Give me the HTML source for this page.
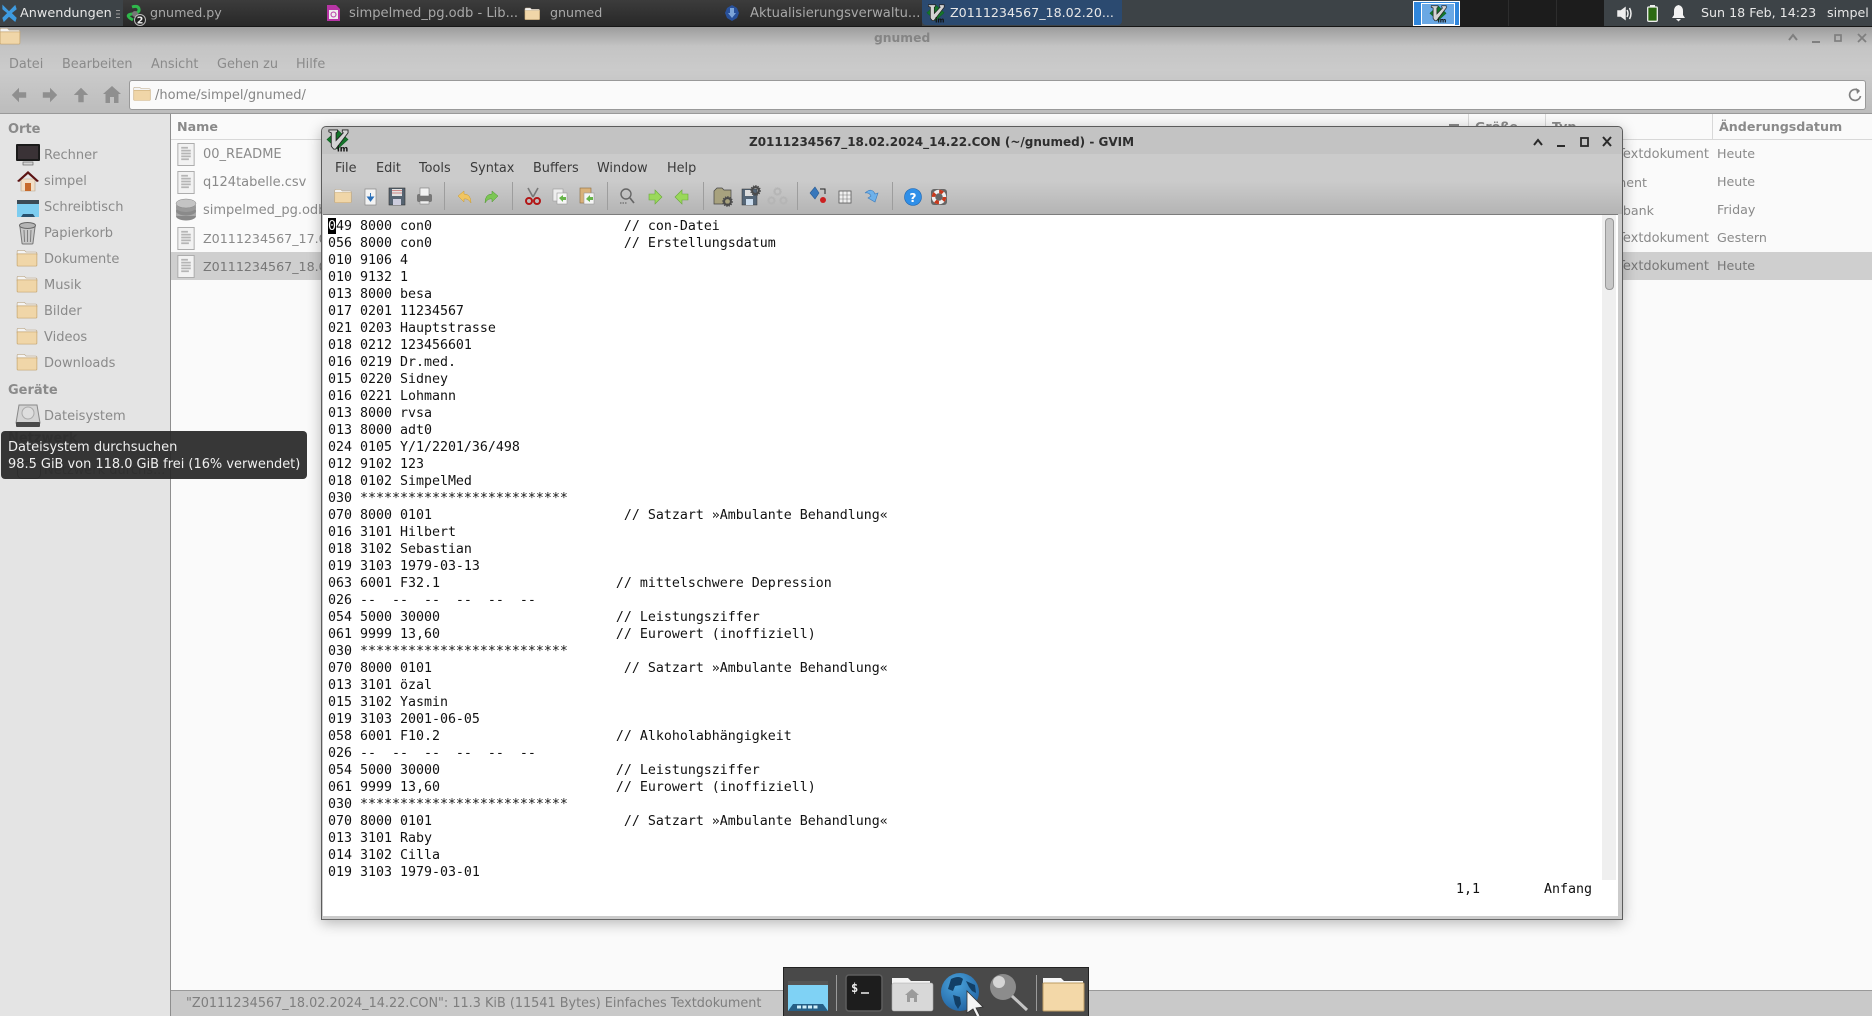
<!DOCTYPE html>
<html lang="de"><head><meta charset="utf-8"><title>GVIM</title>
<style>
html,body{margin:0;padding:0;width:1872px;height:1016px;overflow:hidden;background:#fafafa}
body{position:relative;font:13px "DejaVu Sans","Liberation Sans",sans-serif;color:#8a8a8a}
.a{position:absolute;white-space:nowrap}
.t{position:absolute;white-space:nowrap;line-height:16px;transform:translateY(-6px)}
svg.i{position:absolute;overflow:visible}
#code{position:absolute;left:328px;top:218px;margin:0;font:13.29px/17px "DejaVu Sans Mono","Liberation Mono",monospace;color:#111;white-space:pre}
.m{color:#3a3a3a;font-size:12.85px}
.n{font-size:12.85px}
.t.d{font-size:12.67px;transform:translateY(-7px)}
.t.w{color:#e8e8e8;font-size:12.67px;transform:translateY(-7px)}
.t.g{color:#a8a8a8;font-size:12.67px;transform:translateY(-7px)}
</style></head><body>
<svg width="0" height="0" style="position:absolute"><defs>
<symbol id="folder" viewBox="0 0 24 20"><path d="M1 3.5Q1 2 2.5 2H9l2 2h10.5Q23 4 23 5.500V7H1z" fill="#f4f4f4" stroke="#b9a585" stroke-width=".7"/><path d="M1 6h22v12.500q0 1-1 1H2q-1 0-1-1z" fill="#f0d6a8" stroke="#c5a56f" stroke-width=".8"/></symbol>
<symbol id="doc" viewBox="0 0 18 24"><rect x=".5" y=".5" width="17" height="23" fill="#f2f2f2" stroke="#aaa"/><path d="M4 5h7M4 8h10M4 11h10M4 14h10M4 17h8" stroke="#b5b5b5" stroke-width="1.800"/></symbol>
<symbol id="vim" viewBox="0 0 24 24"><path d="M12 1L23 11 12 21 1 11z" fill="#14752a" stroke="#0a5a1c" stroke-width=".6"/><path d="M3 1h9v2l-1.500 1v8L18 4l-1-1V1h6v3L10 21H8L5.500 18V4L3 3z" fill="#d4d4d4" stroke="#222" stroke-width=".9"/><text x="11.500" y="23.500" font-family="DejaVu Sans" font-size="8.500" font-weight="bold" fill="#111">im</text></symbol>
<symbol id="ar" viewBox="0 0 20 20"><path d="M10 2l8 8-8 8v-5H2V7h8z" fill="currentColor"/></symbol>
<symbol id="gear" viewBox="0 0 16 16"><circle cx="8" cy="8" r="5" fill="none" stroke="currentColor" stroke-width="3"/><circle cx="8" cy="8" r="7" fill="none" stroke="currentColor" stroke-width="1.500" stroke-dasharray="2 1.600"/></symbol>
</defs></svg>

<!-- file manager chrome -->
<div class="a" style="left:0;top:27px;width:1872px;height:87px;background:linear-gradient(#9c9c9c,#c4c4c4 22%,#cbcbcb 50%,#bcbcbc)"></div>
<svg class="i" style="left:0;top:28px" width="22" height="19" viewBox="1 2 22 18"><use href="#folder"/></svg>
<div class="t" style="left:874px;top:36px;font-weight:bold;color:#858585;font-size:12.3px">gnumed</div>
<svg class="i" style="left:1785px;top:30px" width="85" height="16" fill="none" stroke="#7f7f7f" stroke-width="2"><path d="M4 10l4-5 4 5M27 12h8"/><rect x="50" y="5" width="6" height="6" stroke-width="1.700"/><path d="M73 4l8 8M81 4l-8 8" stroke-width="1.800"/></svg>
<div class="t n" style="left:9px;top:63px">Datei</div>
<div class="t n" style="left:62px;top:63px">Bearbeiten</div>
<div class="t n" style="left:151px;top:63px">Ansicht</div>
<div class="t n" style="left:217px;top:63px">Gehen zu</div>
<div class="t n" style="left:296px;top:63px">Hilfe</div>
<svg class="i" style="left:10px;top:86px;color:#8f8f8f;transform:scaleX(-1)" width="18" height="18"><use href="#ar"/></svg>
<svg class="i" style="left:41px;top:86px;color:#8f8f8f" width="18" height="18"><use href="#ar"/></svg>
<svg class="i" style="left:72px;top:86px;color:#8f8f8f;transform:rotate(-90deg)" width="18" height="18"><use href="#ar"/></svg>
<svg class="i" style="left:103px;top:86px" width="18" height="17" viewBox="0 0 18 17"><path d="M9 0l9 8h-2.500v9H11v-6H7v6H2.500V8H0z" fill="#8f8f8f"/></svg>
<div class="a" style="left:129px;top:80px;width:1735px;height:28px;background:#fafafa;border:1px solid #999;border-radius:3px"></div>
<svg class="i" style="left:133px;top:86px" width="18" height="16" viewBox="0 1 24 20"><use href="#folder"/></svg>
<div class="t" style="left:155px;top:94px;color:#858585">/home/simpel/gnumed/</div>
<svg class="i" style="left:1848px;top:87px" width="14" height="15" fill="none" stroke="#808080" stroke-width="1.700"><path d="M11 4A5.500 5.500 0 1 0 12.500 9"/><path d="M8 1l4 3-3 3z" fill="#808080" stroke="none"/></svg>

<!-- sidebar -->
<div class="a" style="left:0;top:114px;width:170px;height:902px;background:#e4e4e4;border-right:1px solid #8e8e8e"></div>
<div class="a" style="left:0;top:113px;width:1872px;height:1px;background:#999"></div>
<div class="t" style="left:8px;top:128px;font-weight:bold">Orte</div>
<svg class="i" style="left:16px;top:144px" width="24" height="22"><rect width="24" height="17" rx="1" fill="#1a1a1a"/><rect x="2" y="2" width="20" height="13" fill="#3a3236"/><rect x="7" y="18" width="10" height="3" fill="#d5d5d5" stroke="#555" stroke-width=".6"/></svg>
<div class="t" style="left:44px;top:154px">Rechner</div>
<svg class="i" style="left:17px;top:170px" width="22" height="22"><path d="M4 9h14v12H4z" fill="#f2dfc8" stroke="#b7a188" stroke-width=".6"/><rect x="8" y="13" width="6" height="8" fill="#c76a2c"/><path d="M0 11L11 1l11 10-2 1-9-8-9 8z" fill="#5c1313"/></svg>
<div class="t" style="left:44px;top:180px">simpel</div>
<svg class="i" style="left:17px;top:200px" width="22" height="17"><rect width="22" height="17" fill="#7dcdf0"/><rect width="22" height="4" fill="#3b4a55"/><path d="M4 17l2-3h10l2 3z" fill="#29516e"/></svg>
<div class="t" style="left:44px;top:206px">Schreibtisch</div>
<svg class="i" style="left:19px;top:222px" width="17" height="22"><path d="M1 5h15l-2 16q0 1-1 1H4q-1 0-1-1z" fill="#c8c8c8" stroke="#777"/><path d="M5 8l.6 12M8.500 8v12M12 8l-.6 12" stroke="#7f7f7f"/><ellipse cx="8.500" cy="3.500" rx="8" ry="3" fill="#b5b5b5" stroke="#666"/></svg>
<div class="t" style="left:44px;top:232px">Papierkorb</div>
<svg class="i" style="left:17px;top:250px" width="22" height="19" viewBox="1 2 22 18"><use href="#folder"/></svg>
<div class="t" style="left:44px;top:258px">Dokumente</div>
<svg class="i" style="left:17px;top:276px" width="22" height="19" viewBox="1 2 22 18"><use href="#folder"/></svg>
<div class="t" style="left:44px;top:284px">Musik</div>
<svg class="i" style="left:17px;top:302px" width="22" height="19" viewBox="1 2 22 18"><use href="#folder"/></svg>
<div class="t" style="left:44px;top:310px">Bilder</div>
<svg class="i" style="left:17px;top:328px" width="22" height="19" viewBox="1 2 22 18"><use href="#folder"/></svg>
<div class="t" style="left:44px;top:336px">Videos</div>
<svg class="i" style="left:17px;top:354px" width="22" height="19" viewBox="1 2 22 18"><use href="#folder"/></svg>
<div class="t" style="left:44px;top:362px">Downloads</div>
<div class="t" style="left:8px;top:389px;font-weight:bold">Geräte</div>
<svg class="i" style="left:16px;top:404px" width="24" height="23"><path d="M3 1h18l3 18H0z" fill="#d4d4d4" stroke="#888"/><circle cx="12" cy="9" r="6" fill="#dedede" stroke="#aaa"/><rect y="18" width="24" height="5" rx="1" fill="#4a4a4a"/></svg>
<div class="t" style="left:44px;top:415px">Dateisystem</div>
<div class="t" style="left:8px;top:437px;font-weight:bold">Netzwerk</div>
<div class="t" style="left:44px;top:469px">Netzwerk durchs...</div>
<div class="a" style="left:17px;top:461px;width:22px;height:16px;border:1px solid #777;border-radius:5px"></div>

<!-- list -->
<div class="t d" style="left:177px;top:126px;font-weight:bold">Name</div>
<div class="a" style="left:171px;top:139px;width:1701px;height:1px;background:#d8d8d8"></div>
<div class="a" style="left:171px;top:252px;width:1701px;height:28px;background:#cfcfcf"></div>
<div class="a" style="left:1468px;top:114px;width:1px;height:25px;background:#d8d8d8"></div>
<div class="a" style="left:1545px;top:114px;width:1px;height:25px;background:#d8d8d8"></div>
<div class="a" style="left:1712px;top:114px;width:1px;height:25px;background:#d8d8d8"></div>
<div class="a" style="left:1449px;top:124px;width:10px;height:2px;background:#8a8a8a"></div>
<div class="t d" style="left:1475px;top:126px;font-weight:bold">Größe</div>
<div class="t d" style="left:1552px;top:126px;font-weight:bold">Typ</div>
<div class="t d" style="left:1719px;top:126px;font-weight:bold">Änderungsdatum</div>
<svg class="i" style="left:177px;top:143px" width="18" height="23"><use href="#doc"/></svg>
<div class="t" style="left:203px;top:153px">00_README</div>
<svg class="i" style="left:177px;top:171px" width="18" height="23"><use href="#doc"/></svg>
<div class="t" style="left:203px;top:181px">q124tabelle.csv</div>
<svg class="i" style="left:176px;top:199px" width="20" height="22"><ellipse cx="10" cy="17" rx="10" ry="4.500" fill="#888"/><rect y="6" width="20" height="11" fill="#aaa"/><ellipse cx="10" cy="12" rx="10" ry="4.500" fill="#8a8a8a"/><ellipse cx="10" cy="8.500" rx="10" ry="4.500" fill="#9a9a9a"/><ellipse cx="10" cy="4.500" rx="10" ry="4.500" fill="#c4c4c4" stroke="#888" stroke-width=".5"/></svg>
<div class="t" style="left:203px;top:209px">simpelmed_pg.odb</div>
<svg class="i" style="left:177px;top:227px" width="18" height="23"><use href="#doc"/></svg>
<div class="t d" style="left:203px;top:238px">Z0111234567_17.02.2024_14.22.CON</div>
<svg class="i" style="left:177px;top:255px" width="18" height="23"><use href="#doc"/></svg>
<div class="t d" style="left:203px;top:266px;color:#777">Z0111234567_18.02.2024_14.22.CON</div>
<div class="t" style="right:163px;top:153px">Einfaches Textdokument</div>
<div class="t d" style="right:225px;top:182px">CSV-Dokument</div>
<div class="t d" style="right:218px;top:210px">ODB-Datenbank</div>
<div class="t" style="right:163px;top:237px">Einfaches Textdokument</div>
<div class="t" style="right:163px;top:265px;color:#777">Einfaches Textdokument</div>
<div class="t d" style="left:1717px;top:153px">Heute</div>
<div class="t d" style="left:1717px;top:181px">Heute</div>
<div class="t d" style="left:1717px;top:209px">Friday</div>
<div class="t d" style="left:1717px;top:237px">Gestern</div>
<div class="t d" style="left:1717px;top:265px;color:#777">Heute</div>

<!-- status bar -->
<div class="a" style="left:171px;top:990px;width:1701px;height:26px;background:#c9c9c9;border-top:1px solid #999;box-sizing:border-box"></div>
<div class="t" style="left:186px;top:1002px;color:#7e7e7e;font-size:12.83px">"Z0111234567_18.02.2024_14.22.CON": 11.3 KiB (11541 Bytes) Einfaches Textdokument</div>

<!-- gvim window -->
<div class="a" style="left:321px;top:126px;width:1300px;height:792px;background:#cbcbcb;border:1px solid #5c5c5c;border-bottom:1px solid #666;border-radius:5px 5px 0 0;box-shadow:0 3px 14px rgba(0,0,0,.28)"></div>
<div class="a" style="left:322px;top:127px;width:1300px;height:27px;background:#c3c3c3;border-radius:5px 5px 0 0"></div>
<svg class="i" style="left:326px;top:129px" width="23" height="23"><use href="#vim"/></svg>
<div class="t" style="left:749px;top:140px;font-weight:bold;font-size:12px;color:#2e2e2e">Z0111234567_18.02.2024_14.22.CON (~/gnumed) - GVIM</div>
<svg class="i" style="left:1530px;top:134px" width="90" height="16" fill="none" stroke="#2a2a2a" stroke-width="2"><path d="M4 11l4-5 4 5M27 12h8"/><rect x="51" y="4" width="7" height="8" stroke-width="1.800"/><path d="M73 3l8 9M81 3l-8 9" stroke-width="2"/></svg>
<div class="a" style="left:322px;top:154px;width:1300px;height:60px;background:linear-gradient(#cbcbcb,#cbcbcb 45%,#b4b4b4)"></div>
<div class="t m" style="left:335px;top:167px">File</div>
<div class="t m" style="left:376px;top:167px">Edit</div>
<div class="t m" style="left:419px;top:167px">Tools</div>
<div class="t m" style="left:470px;top:167px">Syntax</div>
<div class="t m" style="left:533px;top:167px">Buffers</div>
<div class="t m" style="left:597px;top:167px">Window</div>
<div class="t m" style="left:667px;top:167px">Help</div>

<!-- toolbar -->
<svg class="i" style="left:323px;top:180px" width="640" height="34">
<g stroke="#9d9d9d"><path d="M121.500 2v28M189.500 2v28M284.500 2v28M380.500 2v28M474.500 2v28M569.500 2v28"/></g>
<g transform="translate(11,8) scale(.75)"><use href="#folder" width="24" height="20"/></g>
<rect x="42" y="9" width="11" height="16" fill="#f3f3f3" stroke="#888" stroke-width=".7"/><path d="M47.500 13v5M44.500 17l3 4 3-4z" stroke="#2a6fb8" fill="#2a6fb8"/>
<rect x="66" y="8" width="16" height="17" fill="#566472" stroke="#333" stroke-width=".6"/><rect x="69" y="9" width="10" height="7" fill="#e2e2e2"/><path d="M69 10.500h10M69 13h10" stroke="#c88"/><rect x="70" y="19" width="8" height="6" fill="#ccd"/>
<rect x="94" y="14" width="15" height="8" rx="2" fill="#777"/><rect x="97" y="8" width="9" height="8" fill="#f2f2f2" stroke="#777" stroke-width=".6"/><rect x="97" y="21" width="9" height="3" fill="#eee" stroke="#777" stroke-width=".5"/>
<path d="M135 16l6-5v3q7 0 7 9-3-5-7-4v3z" fill="#f0c562" stroke="#c99a30" stroke-width=".5"/>
<path d="M175 16l-6-5v3q-7 0-7 9 3-5 7-4v3z" fill="#7cc654" stroke="#4f9430" stroke-width=".5"/>
<path d="M205 8l5 9M215 8l-5 9" stroke="#777" stroke-width="1.600"/><circle cx="206" cy="21" r="3" fill="none" stroke="#b31616" stroke-width="2"/><circle cx="214" cy="21" r="3" fill="none" stroke="#b31616" stroke-width="2"/>
<rect x="230" y="9" width="10" height="12" fill="#eee" stroke="#999" stroke-width=".6"/><rect x="234" y="13" width="10" height="11" fill="#f6f6f6" stroke="#999" stroke-width=".6"/><path d="M236 18l4-3v2h3v3h-3v2z" fill="#67b54a"/>
<rect x="257" y="8" width="11" height="15" fill="#d9b27a" stroke="#8a6c3f" stroke-width=".6"/><rect x="261" y="13" width="10" height="11" fill="#f5f5f5" stroke="#999" stroke-width=".6"/><path d="M263 19l4-4v2h3v3h-3v2z" fill="#67b54a"/>
<circle cx="303" cy="14" r="5" fill="none" stroke="#666" stroke-width="1.400"/><path d="M307 18l4 5" stroke="#666" stroke-width="1.700"/><path d="M297 23h7" stroke="#555" stroke-dasharray="1.500 1"/>
<path d="M326 14h6v-4l7 7-7 7v-4h-6z" fill="#9ad85a" stroke="#68a83a" stroke-width=".6"/>
<path d="M365 14h-6v-4l-7 7 7 7v-4h6z" fill="#9ad85a" stroke="#68a83a" stroke-width=".6"/>
<path d="M391 11l3-3h5l2 2h7v14h-17z" fill="#a8a27e" stroke="#444" stroke-width=".7"/><svg x="399" y="16" width="11" height="11" color="#4a4a4a"><use href="#gear" width="11" height="11"/></svg>
<rect x="419" y="9" width="15" height="16" fill="#567" stroke="#333" stroke-width=".5"/><rect x="422" y="10" width="8" height="6" fill="#ddd"/><rect x="423" y="19" width="7" height="6" fill="#cde"/><svg x="427" y="5" width="11" height="11" color="#4a4a4a"><use href="#gear" width="11" height="11"/></svg>
<g color="#b5b5b5" transform="translate(1,0)"><svg x="449" y="7" width="9" height="9"><use href="#gear" width="9" height="9"/></svg><svg x="443" y="16" width="9" height="9"><use href="#gear" width="9" height="9"/></svg><svg x="455" y="16" width="9" height="9"><use href="#gear" width="9" height="9"/></svg></g>
<g transform="translate(-2,0)"><path d="M494 7l-5 6 5 6 4-6z" fill="#3777bb" stroke="#2a5a90" stroke-width=".6"/><circle cx="502" cy="20" r="3" fill="#cc2020"/><path d="M499 9h5v5" fill="none" stroke="#222"/></g>
<rect x="516" y="11" width="12" height="12" fill="#f0f0f0" stroke="#555" stroke-width=".8"/><path d="M516 15h12M516 19h12M520 11v12M524 11v12" stroke="#777" stroke-width=".6"/>
<g transform="translate(4,0)"><path d="M538 13q7-6 10 1l3-1-3 9-7-4 3-2q-2-4-6-3z" fill="#6eb1ea" stroke="#3a7bbd" stroke-width=".6"/></g>
<circle cx="590" cy="17" r="8.500" fill="#2f8fe8" stroke="#1f66b0" stroke-width=".6"/><text x="590" y="22" text-anchor="middle" font-family="DejaVu Sans" font-weight="bold" font-size="12" fill="#fff">?</text>
<rect x="608" y="9" width="16" height="16" rx="3" fill="#666"/><circle cx="616" cy="17" r="5.500" fill="none" stroke="#eee" stroke-width="3.500"/><circle cx="616" cy="17" r="5.500" fill="none" stroke="#c9391c" stroke-width="3.500" stroke-dasharray="4 4.640"/></svg>

<div class="a" style="left:323px;top:214px;width:1295px;height:701px;background:#fff;border-top:1px solid #7c7c7c"></div>
<div class="a" style="left:1602px;top:215px;width:14px;height:665px;background:#efefef"></div>
<div class="a" style="left:1605px;top:218px;width:7px;height:70px;background:#c8c8c8;border:1px solid #999;border-radius:4px"></div>
<div class="a" style="left:328px;top:218px;width:8px;height:16px;background:#000"></div>
<pre id="code"><span style="color:#fff">0</span>49 8000 con0                        // con-Datei
056 8000 con0                        // Erstellungsdatum
010 9106 4
010 9132 1
013 8000 besa
017 0201 11234567
021 0203 Hauptstrasse
018 0212 123456601
016 0219 Dr.med.
015 0220 Sidney
016 0221 Lohmann
013 8000 rvsa
013 8000 adt0
024 0105 Y/1/2201/36/498
012 9102 123
018 0102 SimpelMed
030 **************************
070 8000 0101                        // Satzart »Ambulante Behandlung«
016 3101 Hilbert
018 3102 Sebastian
019 3103 1979-03-13
063 6001 F32.1                      // mittelschwere Depression
026 --  --  --  --  --  --
054 5000 30000                      // Leistungsziffer
061 9999 13,60                      // Eurowert (inoffiziell)
030 **************************
070 8000 0101                        // Satzart »Ambulante Behandlung«
013 3101 özal
015 3102 Yasmin
019 3103 2001-06-05
058 6001 F10.2                      // Alkoholabhängigkeit
026 --  --  --  --  --  --
054 5000 30000                      // Leistungsziffer
061 9999 13,60                      // Eurowert (inoffiziell)
030 **************************
070 8000 0101                        // Satzart »Ambulante Behandlung«
013 3101 Raby
014 3102 Cilla
019 3103 1979-03-01</pre>
<div class="a" style="left:1456px;top:881px;font:13.29px/17px 'DejaVu Sans Mono',monospace;color:#111">1,1</div>
<div class="a" style="left:1544px;top:881px;font:13.29px/17px 'DejaVu Sans Mono',monospace;color:#111">Anfang</div>

<!-- tooltip -->
<div class="a" style="left:1px;top:431px;width:306px;height:48px;background:rgba(40,40,40,.93);border-radius:4px"></div>
<div class="t" style="left:8px;top:446px;color:#f0f0f0">Dateisystem durchsuchen</div>
<div class="t" style="left:8px;top:463px;color:#f0f0f0;font-size:12.95px">98.5 GiB von 118.0 GiB frei (16% verwendet)</div>

<!-- top panel -->
<div class="a" style="left:0;top:0;width:1872px;height:26px;background:#3d4347"></div>
<div class="a" style="left:0;top:26px;width:1872px;height:1px;background:#161616"></div>
<div class="a" style="left:123px;top:0;width:799px;height:26px;background:linear-gradient(#3c3c3c,#282828)"></div>
<svg class="i" style="left:2px;top:5px" width="15" height="17"><path d="M1 1l6 6 6-6 1 3-5 4 5 5-1 3-6-5-5 5-1-3 5-5-5-4z" fill="#3e9be0" stroke="#3e9be0" stroke-width="1.200"/></svg>
<div class="t w" style="left:20px;top:13px;font-size:12.8px">Anwendungen</div>
<svg class="i" style="left:116px;top:9px" width="5" height="10" stroke="#9a9a9a"><path d="M0 1.500h4M0 5h4M0 8.500h4"/></svg>
<svg class="i" style="left:126px;top:5px" width="22" height="21"><path d="M6 2q6-2 7 2T6 9t1 6" fill="none" stroke="#2fb84b" stroke-width="3"/><circle cx="9" cy="9" r="3" fill="#777"/><circle cx="14" cy="15" r="5.500" fill="#222" stroke="#bbb" stroke-width="1"/><text x="14" y="18.500" text-anchor="middle" font-size="9.500" font-weight="bold" font-family="DejaVu Sans" fill="#eee">2</text></svg>
<div class="t g" style="left:150px;top:12px">gnumed.py</div>
<svg class="i" style="left:327px;top:5px" width="13" height="16"><path d="M0 0h9l4 4v12H0z" fill="#b735a5"/><rect x="2" y="5" width="9" height="9" fill="#eee"/><circle cx="6.500" cy="9.500" r="2.500" fill="none" stroke="#b735a5"/></svg>
<div class="t g" style="left:349px;top:13px;font-size:13.1px">simpelmed_pg.odb - Lib...</div>
<svg class="i" style="left:525px;top:6px" width="16" height="16" viewBox="1 1 22 20"><use href="#folder"/></svg>
<div class="t g" style="left:550px;top:12px">gnumed</div>
<svg class="i" style="left:725px;top:5px" width="14" height="16"><path d="M7 0l5 3 2 5-2 5-5 3-5-3-2-5 2-5z" fill="#28509a"/><path d="M5 3h4v5h2l-4 5-4-5h2z" fill="#7ca4d8"/></svg>
<div class="t g" style="left:750px;top:13px;font-size:13.1px">Aktualisierungsverwaltu...</div>
<div class="a" style="left:922px;top:0;width:200px;height:25px;background:#2b4a70;border-radius:0 0 4px 4px"></div>
<svg class="i" style="left:926px;top:4px" width="19" height="19"><use href="#vim"/></svg>
<div class="t w" style="left:950px;top:12px">Z0111234567_18.02.20...</div>
<div class="a" style="left:1413px;top:1px;width:47px;height:25px;background:#2f86dc;border:1px solid #fff;box-sizing:border-box"></div>
<div class="a" style="left:1421px;top:3px;width:32px;height:20px;background:#6aa8e4;border:1px solid #fff"></div>
<svg class="i" style="left:1429px;top:5px" width="18" height="18"><use href="#vim"/></svg>
<div class="a" style="left:1460px;top:0;width:144px;height:26px;background:#1c1c1c"></div>
<div class="a" style="left:1508px;top:0;width:1px;height:26px;background:#2d2d2d"></div>
<div class="a" style="left:1556px;top:0;width:1px;height:26px;background:#2d2d2d"></div>
<svg class="i" style="left:1617px;top:4px" width="17" height="18" fill="none" stroke="#eee" stroke-width="1.500"><path d="M1 7h3l4-3v11l-4-3H1z" fill="#eee"/><path d="M10 6q2 3.500 0 7M12.500 4q3 5.500 0 11"/></svg>
<svg class="i" style="left:1647px;top:4px" width="11" height="18"><rect x=".7" y="3" width="9.600" height="14.300" rx="1" fill="#2c6a12" stroke="#eee" stroke-width="1.300"/><rect x="3" y="1" width="5" height="2" fill="#eee"/></svg>
<svg class="i" style="left:1672px;top:5px" width="13" height="17"><path d="M6.500 0q4.500 1 4.500 6v4l2 3H0l2-3V6q0-5 4.500-6z" fill="#f2f2f2"/><path d="M4 14h5l-2.500 2.500z" fill="#f2f2f2"/></svg>
<div class="t w" style="left:1701px;top:12px">Sun 18 Feb, 14:23</div>
<div class="t w" style="left:1827px;top:12px">simpel</div>

<!-- dock -->
<div class="a" style="left:783px;top:967px;width:306px;height:49px;background:#494949;border:1px solid #222;border-bottom:0;box-sizing:border-box"></div>
<svg class="i" style="left:783px;top:967px" width="305" height="49">
<defs><radialGradient id="gl" cx=".4" cy=".3" r=".8"><stop offset="0" stop-color="#4aa3dc"/><stop offset="1" stop-color="#1f5f9e"/></radialGradient></defs>
<path d="M53.500 8v36M253.500 8v36" stroke="#9a9a9a"/>
<rect x="5" y="14" width="40" height="30" fill="#7fd2f5"/><rect x="5" y="14" width="40" height="4" fill="#555"/><path d="M5 44l5-7h30l5 7z" fill="#265f86"/><path d="M14 40h22" stroke="#cfeffa" stroke-width="3" stroke-dasharray="4 1.500"/>
<rect x="63" y="8" width="36" height="36" rx="3" fill="#1d1d1d" stroke="#5e5e5e" stroke-width="1.500"/><text x="68" y="25" font-family="DejaVu Sans Mono" font-weight="bold" font-size="12" fill="#eee">$</text><path d="M78 26h8" stroke="#eee" stroke-width="1.500"/>
<path d="M109 11h16l3 3h19v5h-38z" fill="#f4f4f4"/><rect x="109" y="16" width="41" height="28" rx="2" fill="#d8d8d8" stroke="#aaa" stroke-width=".6"/><path d="M129 22l7 6h-2v7h-3v-4h-4v4h-3v-7h-2z" fill="#9b9b9b"/>
<circle cx="177" cy="25" r="19" fill="url(#gl)"/><path d="M168 12q8-4 12 0l-2 6-6 1-2 5-5-2zM170 28l7 2 1 7-3 5-3-5zM183 14l9 4 1 8-4-2-3-4z" fill="#123f66"/><path d="M184 24l16 16-7 1 4 8-3 1-4-8-6 4z" fill="#f4f4f4" stroke="#333" stroke-width=".8"/>
<circle cx="220" cy="20" r="13" fill="#8c8c8c"/><circle cx="216" cy="15" r="6" fill="#d5d5d5"/><path d="M229 29l15 14" stroke="#c4c4c4" stroke-width="3"/>
<path d="M260 11h18l3 3h19v5h-40z" fill="#f7f7f7"/><rect x="260" y="16" width="41" height="28" rx="1" fill="#f3d8a8" stroke="#bd9c62"/>
</svg>
</body></html>
